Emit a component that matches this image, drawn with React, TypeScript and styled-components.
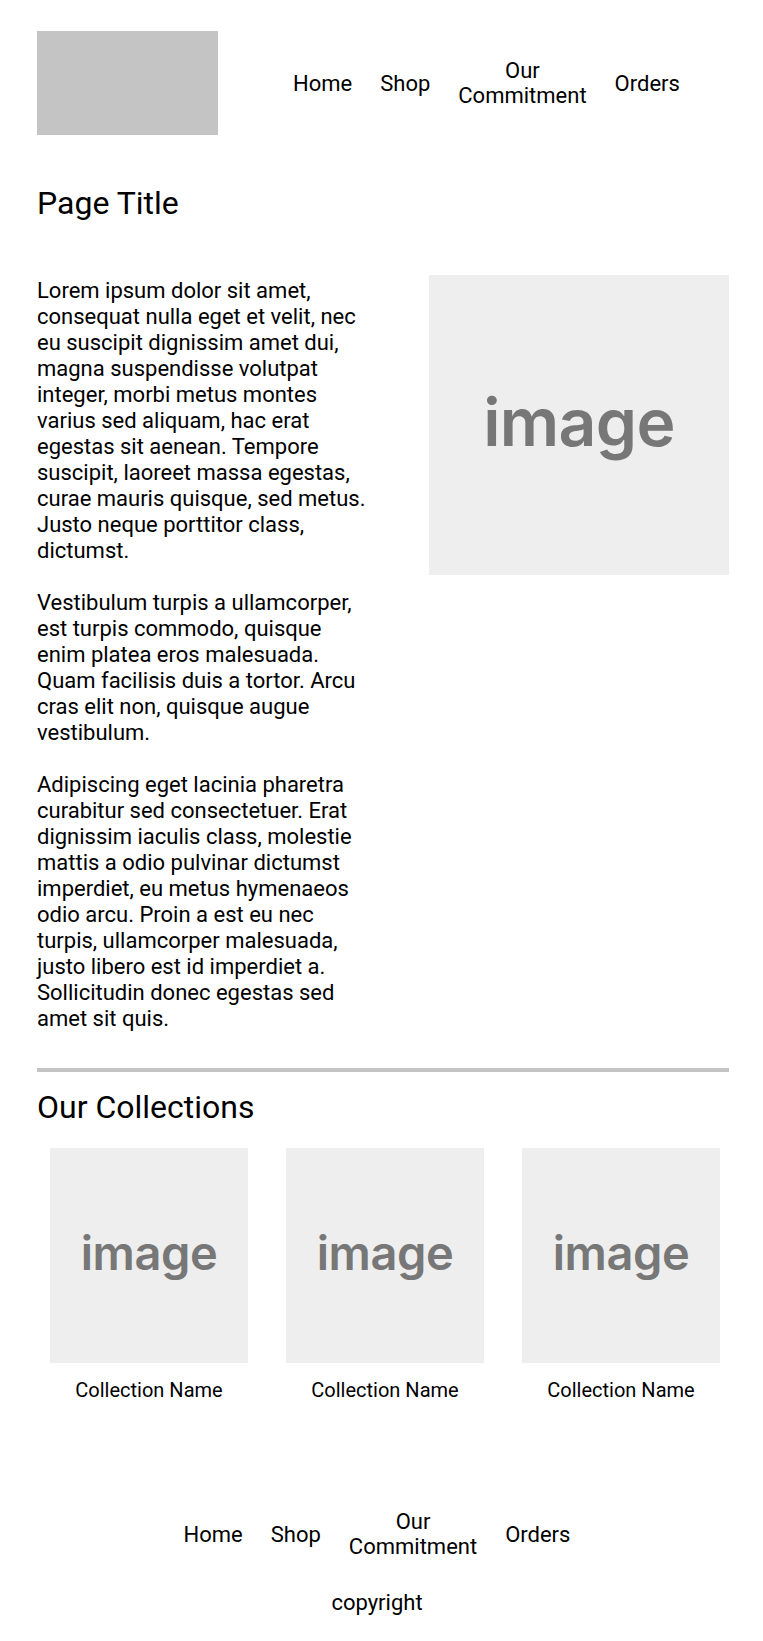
import styled, { createGlobalStyle } from "styled-components";

const GlobalStyle = createGlobalStyle`
  body {
    margin: 0;
    background: #ffffff;
    color: #000000;
    font-family: Roboto, "Liberation Sans", sans-serif;
  }
`;

const Page = styled.div`
  padding: 31px 34px 26px 37px;
`;

const Header = styled.header`
  display: flex;
  align-items: center;
`;

const Logo = styled.div`
  width: 181px;
  height: 104px;
  background: #c4c4c4;
  flex-shrink: 0;
`;

const Nav = styled.nav<{ $inset?: number }>`
  display: flex;
  align-items: center;
  gap: 28px;
  margin-left: ${(p) => p.$inset ?? 0}px;
`;

const NavLink = styled.a`
  font-size: 22px;
  line-height: normal;
  text-align: center;
  color: #000;
  text-decoration: none;
`;

const PageTitle = styled.h1<{ $top: number }>`
  margin: ${(p) => p.$top}px 0 0;
  font-size: 32px;
  font-weight: 400;
  line-height: normal;
`;

const Intro = styled.section`
  display: flex;
  justify-content: space-between;
  align-items: flex-start;
  margin-top: 53px;
`;

const TextColumn = styled.div`
  width: 332px;
  padding-top: 3px;
  font-size: 22px;
  line-height: 26px;

  p {
    margin: 0 0 26px;
  }
  p:last-child {
    margin-bottom: 0;
  }
`;

const Placeholder = styled.div<{ $w: number; $h: number; $size: number }>`
  width: ${(p) => p.$w}px;
  height: ${(p) => p.$h}px;
  box-sizing: border-box;
  padding-bottom: 6px;
  flex-shrink: 0;
  background: #eeeeee;
  display: flex;
  align-items: center;
  justify-content: center;
  color: #777777;
  font-family: Inter, Roboto, sans-serif;
  font-weight: 600;
  font-size: ${(p) => p.$size}px;
  letter-spacing: -0.01em;
`;

const Divider = styled.hr`
  margin: 36px 0 0;
  height: 4px;
  border: 0;
  background: #c4c4c4;
`;

const Collections = styled.div`
  display: flex;
  gap: 38px;
  padding-left: 13px;
  margin-top: 22px;
`;

const Card = styled.div`
  display: flex;
  flex-direction: column;
  align-items: center;
`;

const CardLabel = styled.div`
  margin-top: 15px;
  font-size: 20px;
  line-height: normal;
`;

const Footer = styled.footer`
  display: flex;
  flex-direction: column;
  align-items: center;
  margin-top: 107px;
  padding-right: 12px;
`;

const Copyright = styled.div`
  margin-top: 31px;
  font-size: 22px;
  line-height: normal;
`;

const links = ["Home", "Shop", "Our Commitment", "Orders"];

function NavLinks() {
  return (
    <>
      {links.map((l) => (
        <NavLink key={l} href="#">
          {l === "Our Commitment" ? (
            <>
              Our
              <br />
              Commitment
            </>
          ) : (
            l
          )}
        </NavLink>
      ))}
    </>
  );
}

const paragraphs = [
  "Lorem ipsum dolor sit amet, consequat nulla eget et velit, nec eu suscipit dignissim amet dui, magna suspendisse volutpat integer, morbi metus montes varius sed aliquam, hac erat egestas sit aenean. Tempore suscipit, laoreet massa egestas, curae mauris quisque, sed metus. Justo neque porttitor class, dictumst.",
  "Vestibulum turpis a ullamcorper, est turpis commodo, quisque enim platea eros malesuada. Quam facilisis duis a tortor. Arcu cras elit non, quisque augue vestibulum.",
  "Adipiscing eget lacinia pharetra curabitur sed consectetuer. Erat dignissim iaculis class, molestie mattis a odio pulvinar dictumst imperdiet, eu metus hymenaeos odio arcu. Proin a est eu nec turpis, ullamcorper malesuada, justo libero est id imperdiet a. Sollicitudin donec egestas sed amet sit quis.",
];

export default function App() {
  return (
    <>
      <GlobalStyle />
      <Page>
        <Header>
          <Logo />
          <Nav $inset={75}>
            <NavLinks />
          </Nav>
        </Header>

        <PageTitle $top={49}>Page Title</PageTitle>

        <Intro>
          <TextColumn>
            {paragraphs.map((p, i) => (
              <p key={i}>{p}</p>
            ))}
          </TextColumn>
          <Placeholder $w={300} $h={300} $size={66}>
            image
          </Placeholder>
        </Intro>

        <Divider />

        <PageTitle $top={16}>Our Collections</PageTitle>

        <Collections>
          {[0, 1, 2].map((i) => (
            <Card key={i}>
              <Placeholder $w={198} $h={215} $size={47}>
                image
              </Placeholder>
              <CardLabel>Collection Name</CardLabel>
            </Card>
          ))}
        </Collections>

        <Footer>
          <Nav>
            <NavLinks />
          </Nav>
          <Copyright>copyright</Copyright>
        </Footer>
      </Page>
    </>
  );
}
